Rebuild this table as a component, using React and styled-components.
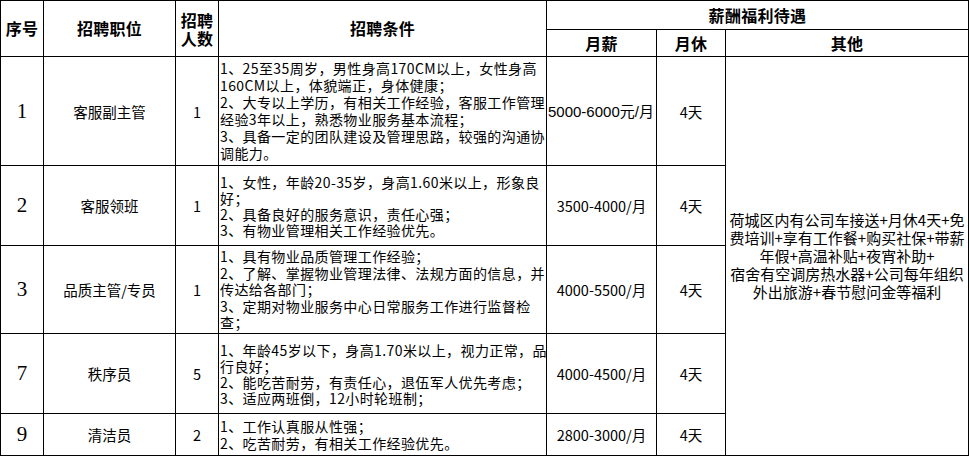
import React from "react";
import styled, { createGlobalStyle } from "styled-components";

const GlobalStyle = createGlobalStyle`
  html, body {
    margin: 0;
    padding: 0;
    background: #fff;
  }
  body {
    font-family: "Noto Sans CJK SC", "Noto Sans", sans-serif;
    color: #000;
  }
`;

const jobs = [
  {
    no: "1",
    title: "客服副主管",
    count: "1",
    lines: [
      "1、25至35周岁，男性身高170CM以上，女性身高",
      "160CM以上，体貌端正，身体健康；",
      "2、大专以上学历，有相关工作经验，客服工作管理",
      "经验3年以上，熟悉物业服务基本流程；",
      "3、具备一定的团队建设及管理思路，较强的沟通协",
      "调能力。",
    ],
    salary: "5000-6000元/月",
    left: true,
    lh: 17,
  },
  {
    no: "2",
    title: "客服领班",
    count: "1",
    lines: [
      "1、女性，年龄20-35岁，身高1.60米以上，形象良",
      "好；",
      "2、具备良好的服务意识，责任心强；",
      "3、有物业管理相关工作经验优先。",
    ],
    salary: "3500-4000/月",
    lh: 16,
  },
  {
    no: "3",
    title: "品质主管/专员",
    count: "1",
    lines: [
      "1、具有物业品质管理工作经验；",
      "2、了解、掌握物业管理法律、法规方面的信息，并",
      "传达给各部门；",
      "3、定期对物业服务中心日常服务工作进行监督检",
      "查；",
    ],
    salary: "4000-5500/月",
    lh: 16.5,
  },
  {
    no: "7",
    title: "秩序员",
    count: "5",
    lines: [
      "1、年龄45岁以下，身高1.70米以上，视力正常，品",
      "行良好；",
      "2、能吃苦耐劳，有责任心，退伍军人优先考虑；",
      "3、适应两班倒，12小时轮班制；",
    ],
    salary: "4000-4500/月",
    lh: 16,
  },
  {
    no: "9",
    title: "清洁员",
    count: "2",
    lines: ["1、工作认真服从性强；", "2、吃苦耐劳，有相关工作经验优先。"],
    salary: "2800-3000/月",
    lh: 17,
  },
];

const benefits = [
  "荷城区内有公司车接送+月休4天+免",
  "费培训+享有工作餐+购买社保+带薪",
  "年假+高温补贴+夜宵补助+",
  "宿舍有空调房热水器+公司每年组织",
  "外出旅游+春节慰问金等福利",
];

function App() {
  return (
    <>
      <GlobalStyle />
      <Sheet>
        <Head $col="1" $row="1 / 3">序号</Head>
        <Head $col="2" $row="1 / 3">招聘职位</Head>
        <Head $col="3" $row="1 / 3">
          <HeadStack>
            <span>招聘</span>
            <span>人数</span>
          </HeadStack>
        </Head>
        <Head $col="4" $row="1 / 3">招聘条件</Head>
        <Head $col="5 / 8" $row="1">薪酬福利待遇</Head>
        <Head $col="5" $row="2">月薪</Head>
        <Head $col="6" $row="2">月休</Head>
        <Head $col="7" $row="2">其他</Head>

        {jobs.map((job, i) => {
          const row = String(i + 3);
          return (
            <React.Fragment key={job.no}>
              <Cell $col="1" $row={row}>
                <Serial>{job.no}</Serial>
              </Cell>
              <Cell $col="2" $row={row}>
                {job.title}
              </Cell>
              <Cell $col="3" $row={row}>
                {job.count}
              </Cell>
              <Terms $col="4" $row={row} $lh={job.lh}>
                {job.lines.map((line) => (
                  <TermLine key={line}>{line}</TermLine>
                ))}
              </Terms>
              <Cell $col="5" $row={row} $left={job.left}>
                <Salary $wide={job.left}>{job.salary}</Salary>
              </Cell>
              <Cell $col="6" $row={row}>
                4天
              </Cell>
            </React.Fragment>
          );
        })}

        <Cell $col="7" $row="3 / 8">
          <Benefits>
            {benefits.map((line) => (
              <span key={line}>{line}</span>
            ))}
          </Benefits>
        </Cell>
      </Sheet>
    </>
  );
}

const Sheet = styled.div`
  display: grid;
  grid-template-columns: 42px 131px 42px 327px 109px 68px 242px;
  grid-template-rows: 28px 26px 108px 79px 87px 79px 41px;
  gap: 1px;
  padding: 1px;
  width: fit-content;
  background: #000;
`;

const Cell = styled.div`
  grid-column: ${(p) => p.$col};
  grid-row: ${(p) => p.$row};
  background: #fff;
  display: flex;
  align-items: center;
  justify-content: ${(p) => (p.$left ? "flex-start" : "center")};
  font-size: 14.5px;
  line-height: 17px;
  overflow: hidden;
  white-space: nowrap;
`;

const Head = styled(Cell)`
  font-size: 16px;
  font-weight: 700;
  letter-spacing: 0.3px;
`;

const HeadStack = styled.div`
  display: flex;
  flex-direction: column;
  align-items: center;
  line-height: 18px;
`;

const Serial = styled.span`
  font-family: "Liberation Serif", "Times New Roman", serif;
  font-size: 21px;
`;

const Terms = styled(Cell)`
  flex-direction: column;
  align-items: stretch;
  justify-content: center;
  padding-left: 1px;
  font-size: 14px;
  letter-spacing: 0.4px;
  line-height: ${(p) => p.$lh}px;
`;

const TermLine = styled.span`
  display: block;
  white-space: nowrap;
`;

const Salary = styled.span`
  font-family: ${(p) =>
    p.$wide
      ? `"Liberation Sans", "Noto Sans CJK SC", sans-serif`
      : `"Noto Sans CJK SC", sans-serif`};
  font-size: ${(p) => (p.$wide ? "15px" : "14.5px")};
  padding-left: ${(p) => (p.$wide ? "1px" : "0")};
`;

const Benefits = styled.div`
  display: flex;
  flex-direction: column;
  align-items: center;
  line-height: 18px;
  font-size: 15px;
`;

export default App;
